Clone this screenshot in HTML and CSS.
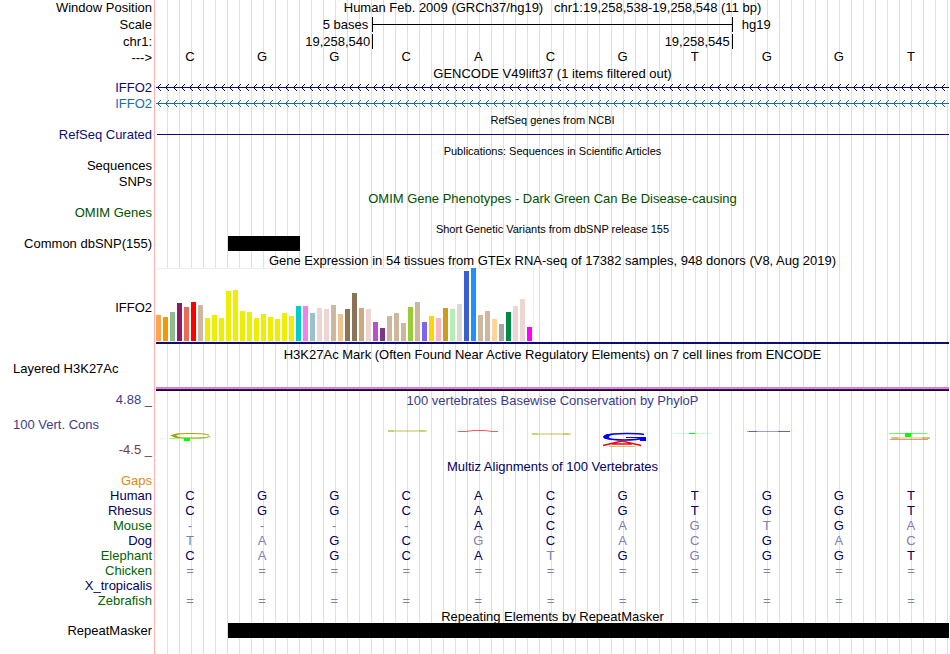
FILE: index.html
```html
<!DOCTYPE html>
<html lang="en">
<head>
    <meta charset="UTF-8">
    <meta name="viewport" content="width=device-width, initial-scale=1.0">
    <title>Human chr1:19,258,538-19,258,548</title>
    <link rel="stylesheet" href="styles.css">
</head>
<body>
    <main class="browser">
        <!-- ruler -->
        <div class="row header">
            <div class="label">Window Position</div>
            <div class="position">Human Feb. 2009 (GRCh37/hg19) &nbsp; chr1:19,258,538-19,258,548 (11 bp)</div>
        </div>
        <div class="row header">
            <div class="label">Scale</div>
            <div class="bases">
                <span class="before">5 bases</span>
                <span class="scale-bar"></span>
                <span class="after">hg19</span>
            </div>
        </div>
        <div class="row">
            <div class="label">chr1:</div>
            <div class="bases">
                <span class="before tick-text">19,258,540</span>
                <span class="ticks tick-text">19,258,545</span>
            </div>
        </div>
        <div class="row tall">
            <div class="label arrow">---&gt;</div>
            <div class="bases seq black"><span>C</span><span>G</span><span>G</span><span>C</span><span>A</span><span>C</span><span>G</span><span>T</span><span>G</span><span>G</span><span>T</span></div>
        </div>

        <!-- genes -->
        <h2 class="title compact">GENCODE V49lift37 (1 items filtered out)</h2>
        <div class="row tall navy">
            <div class="label">IFFO2</div>
            <svg class="gene" aria-hidden="true">
                <defs>
                    <pattern id="strand" width="8" height="16" patternUnits="userSpaceOnUse">
                        <path d="M0 7h8v1H0zM1 7h1v1H1zM2 6h1v3H2zM3 5h1v1H3zM3 9h1v1H3zM4 4h1v1H4zM4 10h1v1H4z"/>
                    </pattern>
                </defs>
                <rect width="100%" height="16" fill="url(#strand)"/>
            </svg>
        </div>
        <div class="row tall blue">
            <div class="label">IFFO2</div>
            <svg class="gene" aria-hidden="true">
                <defs>
                    <pattern id="strand2" width="8" height="16" patternUnits="userSpaceOnUse">
                        <path d="M0 7h8v1H0zM1 7h1v1H1zM2 6h1v3H2zM3 5h1v1H3zM3 9h1v1H3zM4 4h1v1H4zM4 10h1v1H4z"/>
                    </pattern>
                </defs>
                <rect width="100%" height="16" fill="url(#strand2)"/>
            </svg>
        </div>
        <h2 class="title small compact">RefSeq genes from NCBI</h2>
        <div class="row navy">
            <div class="label">RefSeq Curated</div>
            <div class="intron"></div>
        </div>
        <h2 class="title small">Publications: Sequences in Scientific Articles</h2>
        <div class="row"><div class="label">Sequences</div></div>
        <div class="row tall"><div class="label low">SNPs</div></div>
        <h2 class="title green">OMIM Gene Phenotypes - Dark Green Can Be Disease-causing</h2>
        <div class="row green"><div class="label">OMIM Genes</div></div>
        <h2 class="title small">Short Genetic Variants from dbSNP release 155</h2>
        <div class="row">
            <div class="label">Common dbSNP(155)</div>
            <div class="bases"><span class="block snp"></span></div>
        </div>

        <!-- expression -->
        <h2 class="title">Gene Expression in 54 tissues from GTEx RNA-seq of 17382 samples, 948 donors (V8, Aug 2019)</h2>
        <div class="row gtex">
            <div class="label">IFFO2</div>
            <div class="expression"><div class="bars" id="bars"></div></div>
        </div>
        <h2 class="title roomy">H3K27Ac Mark (Often Found Near Active Regulatory Elements) on 7 cell lines from ENCODE</h2>
        <div class="row histone">
            <div class="label left">Layered H3K27Ac</div>
            <div class="signal"></div>
        </div>

        <!-- conservation -->
        <div class="row conservation">
            <div class="axis">
                <div class="label slate">4.88 _</div>
                <div class="label left slate">100 Vert. Cons</div>
                <div class="label brown">-4.5 _</div>
            </div>
            <div class="wiggle">
                <h2 class="title slate">100 vertebrates Basewise Conservation by PhyloP</h2>
                <svg class="logo" viewBox="0 0 793 24" preserveAspectRatio="none" aria-hidden="true">
                    <!-- C over T -->
                    <path d="M13 13.5H49" stroke="#9f9"/>
                    <path d="M53 10C48 8 22 8 17 10C14 12 22 13 34 13C44 13 50 13 54 11.5" fill="none" stroke="#a5a500"/>
                    <path d="M14 10.5L21 8.5H25L20 10.5L25 13H21Z" fill="#a5a500"/>
                    <rect x="28" y="13" width="6" height="3" fill="#0f0"/>
                    <!-- C -->
                    <rect x="232" y="5" width="39" height="2" fill="#a5a500" opacity=".35"/>
                    <path d="M232 6H238M263 6H269" stroke="#a5a500" opacity=".3" stroke-width="2"/>
                    <!-- A -->
                    <path d="M302 6.5H310L317 5.5H329L336 6.5H342" fill="none" stroke="#f00" opacity=".65"/>
                    <!-- C -->
                    <rect x="376" y="8" width="39" height="2" fill="#a5a500" opacity=".35"/>
                    <path d="M376 9H382M407 9H413" stroke="#a5a500" opacity=".3" stroke-width="2"/>
                    <!-- G over A -->
                    <path d="M488 9.5C482 8 458 8 451 10C444 12 452 15 468 15C477 15 483 14.5 486 13" fill="none" stroke="#00f" stroke-width="1.5"/>
                    <path d="M447 12C448 9 454 9 460 8.5C452 10.5 450 13 458 15C450 14.5 448 14 447 12Z" fill="#00f"/>
                    <path d="M470 12H490V16H484V13H470Z" fill="#00f"/>
                    <path d="M447 20.5L466 16L485 20.5M456 19H476" fill="none" stroke="#f00" stroke-width="1.5"/>
                    <path d="M453 21.5H479" stroke="#a5a500" opacity=".6"/>
                    <!-- T -->
                    <path d="M517 8.5H555" stroke="#0f0" opacity=".2"/>
                    <rect x="533" y="8" width="6" height="1" fill="#0f0"/>
                    <!-- G -->
                    <path d="M591 6.5H634" stroke="#00f" opacity=".4"/>
                    <path d="M593 6.5H601M622 6.5H634" stroke="#00f" opacity=".4"/>
                    <!-- T over C -->
                    <path d="M733 8.5H771" stroke="#0f0" opacity=".6"/>
                    <rect x="749" y="8" width="6" height="4" fill="#0f0"/>
                    <rect x="736" y="12" width="38" height="2" fill="#a5a500" opacity=".3"/>
                    <path d="M735 13H742M766 13H774" stroke="#a5a500" opacity=".4" stroke-width="2"/>
                    <path d="M734 14.5H772" stroke="#f00" opacity=".45"/>
                </svg>
            </div>
        </div>

        <!-- alignments -->
        <h2 class="title compact navy-dark">Multiz Alignments of 100 Vertebrates</h2>
        <div class="row orange"><div class="label">Gaps</div></div>
        <div class="row">
            <div class="label primate">Human</div>
            <div class="bases seq"><span>C</span><span>G</span><span>G</span><span>C</span><span>A</span><span>C</span><span>G</span><span>T</span><span>G</span><span>G</span><span>T</span></div>
        </div>
        <div class="row">
            <div class="label primate">Rhesus</div>
            <div class="bases seq"><span>C</span><span>G</span><span>G</span><span>C</span><span>A</span><span>C</span><span>G</span><span>T</span><span>G</span><span>G</span><span>T</span></div>
        </div>
        <div class="row">
            <div class="label other">Mouse</div>
            <div class="bases seq"><i>-</i><i>-</i><i>-</i><i>-</i><span>A</span><span>C</span><i>A</i><i>G</i><i>T</i><span>G</span><i>A</i></div>
        </div>
        <div class="row">
            <div class="label primate">Dog</div>
            <div class="bases seq"><i>T</i><i>A</i><span>G</span><span>C</span><i>G</i><span>C</span><i>A</i><i>C</i><span>G</span><i>A</i><i>C</i></div>
        </div>
        <div class="row">
            <div class="label other">Elephant</div>
            <div class="bases seq"><span>C</span><i>A</i><span>G</span><span>C</span><span>A</span><i>T</i><span>G</span><i>G</i><span>G</span><span>G</span><span>T</span></div>
        </div>
        <div class="row">
            <div class="label other">Chicken</div>
            <div class="bases seq"><i>=</i><i>=</i><i>=</i><i>=</i><i>=</i><i>=</i><i>=</i><i>=</i><i>=</i><i>=</i><i>=</i></div>
        </div>
        <div class="row"><div class="label primate">X_tropicalis</div></div>
        <div class="row">
            <div class="label other">Zebrafish</div>
            <div class="bases seq"><i>=</i><i>=</i><i>=</i><i>=</i><i>=</i><i>=</i><i>=</i><i>=</i><i>=</i><i>=</i><i>=</i></div>
        </div>
        <h2 class="title compact">Repeating Elements by RepeatMasker</h2>
        <div class="row">
            <div class="label">RepeatMasker</div>
            <div class="bases"><span class="block repeat"></span></div>
        </div>
    </main>
    <script src="script.js"></script>
</body>
</html>
```
FILE: styles.css
```css
* {
    box-sizing: border-box;
}

body {
    margin: 0;
    padding-right: 1px;
    background: #fff;
    color: #000;
    font-family: "Liberation Sans", Arial, sans-serif;
    font-size: 13px;
    line-height: 15px;
}

/* pink divider, white label column, then a guide line every 12px */
.browser {
    min-height: 100vh;
    background:
        linear-gradient(#ffb0b0, #ffb0b0) 154px 0 / 1px 100% no-repeat,
        linear-gradient(#fff, #fff) 0 0 / 156px 100% no-repeat,
        linear-gradient(to right, transparent 11px, #dcdcf8 11px) 156px 0 / 12px 100% repeat-x;
}

.row {
    display: grid;
    grid-template-columns: 156px 1fr;
    min-height: 15px;
}

.row.header {
    min-height: 17px;
}

.row.tall {
    min-height: 16px;
}

.label {
    padding-right: 4px;
    text-align: right;
    white-space: nowrap;
}

.label.left {
    padding-left: 13px;
    text-align: left;
}

.label.arrow,
.label.low {
    padding-top: 1px;
}

.title {
    margin: 0;
    padding: 3px 0 0 156px;
    font-size: 13px;
    font-weight: normal;
    line-height: 13px;
    text-align: center;
    white-space: nowrap;
}

.title.small {
    font-size: 11px;
}

.title.compact {
    padding-top: 2px;
}

.title.roomy {
    padding-top: 4px;
}

.position {
    text-align: center;
    white-space: nowrap;
}

.bases {
    display: grid;
    grid-template-columns: repeat(11, 1fr);
}

.before {
    grid-column: 1 / 4;
    padding-right: 4px;
    text-align: right;
}

.scale-bar {
    grid-column: 4 / 9;
    height: 15px;
    border: solid #000;
    border-width: 0 1px;
    background: linear-gradient(#000, #000) 0 7px / 100% 1px no-repeat;
}

.after {
    padding-left: 9px;
}

.tick-text {
    padding-right: 2px;
}

.ticks {
    grid-column: 4 / 9;
    border: solid #000;
    border-width: 0 1px;
    text-align: right;
}

.seq {
    color: #000064;
}

.seq > * {
    padding-right: 4px;
    font-style: normal;
    text-align: center;
}

.seq i {
    color: #8080b4;
}

.seq.black {
    color: #000;
}

.gene {
    display: block;
    width: 100%;
    height: 16px;
    fill: currentColor;
}

.intron {
    height: 1px;
    margin: 7px 0 0 1px;
    background: #0c0c78;
}

.block {
    height: 15px;
    background: #000;
}

.snp {
    grid-column: 2 / 3;
}

.repeat {
    grid-column: 2 / 12;
}

.gtex {
    min-height: 77px;
}

.gtex .label {
    align-self: center;
    padding-top: 4px;
}

.expression {
    display: flex;
    align-items: flex-end;
    border-bottom: 2px solid #0c0c78;
}

.bars {
    display: flex;
    gap: 2px;
    align-items: flex-end;
    height: 74px;
    padding-right: 1px;
    border: solid #eee;
    border-width: 1px 1px 1px 0;
    background: #fff;
}

.bar {
    width: 5px;
}

.histone {
    min-height: 30px;
}

.signal {
    align-self: end;
    height: 4px;
    background: linear-gradient(#cf80f5 2px, #5c1040 2px, #5c1040 3px, #200018 3px);
}

.conservation {
    min-height: 67px;
}

.axis {
    display: flex;
    flex-direction: column;
    gap: 10px;
    padding-top: 1px;
}

.wiggle .title {
    padding: 3px 0 0;
}

.logo {
    display: block;
    width: 100%;
    height: 24px;
    margin-top: 18px;
}

.navy {
    color: #0c0c78;
}

.navy-dark,
.primate {
    color: #000064;
}

.blue {
    color: #1a6cab;
}

.green {
    color: #005000;
}

.slate {
    color: #3c3c8c;
}

.brown {
    color: #783c3c;
}

.orange {
    color: #e08a10;
}

.other {
    color: #006400;
}
```
FILE: script.js
```javascript
// median expression per tissue: [height, colour]
const tissues = [
    [26, '#ffa54f'], [24, '#ee9a00'], [29, '#8fbc8f'], [38, '#8b1c62'], [34, '#ee6a50'], [39, '#ff0000'],
    [36, '#cdb79e'], [23, '#eeee00'], [26, '#eeee00'], [23, '#eeee00'], [50, '#eeee00'], [51, '#eeee00'],
    [30, '#eeee00'], [29, '#eeee00'], [23, '#eeee00'], [27, '#eeee00'], [24, '#eeee00'], [22, '#eeee00'],
    [28, '#eeee00'], [25, '#eeee00'], [35, '#00cdcd'], [35, '#ee82ee'], [28, '#9ac0cd'], [33, '#eed5d2'],
    [32, '#eed5d2'], [36, '#cdb79e'], [27, '#eec591'], [32, '#8b7355'], [48, '#8b7355'], [33, '#cdaa7d'],
    [32, '#eed5d2'], [19, '#b452cd'], [13, '#7a378b'], [25, '#cdb79e'], [28, '#cdb79e'], [18, '#cdb79e'],
    [34, '#9acd32'], [39, '#cdb79e'], [19, '#7a67ee'], [25, '#ffd700'], [23, '#ffb6c1'], [33, '#cd9b1d'],
    [32, '#b4eeb4'], [37, '#d9d9d9'], [70, '#3a5fcd'], [73, '#1e90ff'], [26, '#cdb79e'], [30, '#cdb79e'],
    [22, '#ffd39b'], [17, '#a6a6a6'], [29, '#008b45'], [35, '#eed5d2'], [42, '#eed5d2'], [14, '#ff00ff']
];

const bars = document.getElementById('bars');

tissues.forEach(([height, colour]) => {
    const bar = document.createElement('div');
    bar.className = 'bar';
    bar.style.height = `${height}px`;
    bar.style.background = colour;
    bars.appendChild(bar);
});
```
